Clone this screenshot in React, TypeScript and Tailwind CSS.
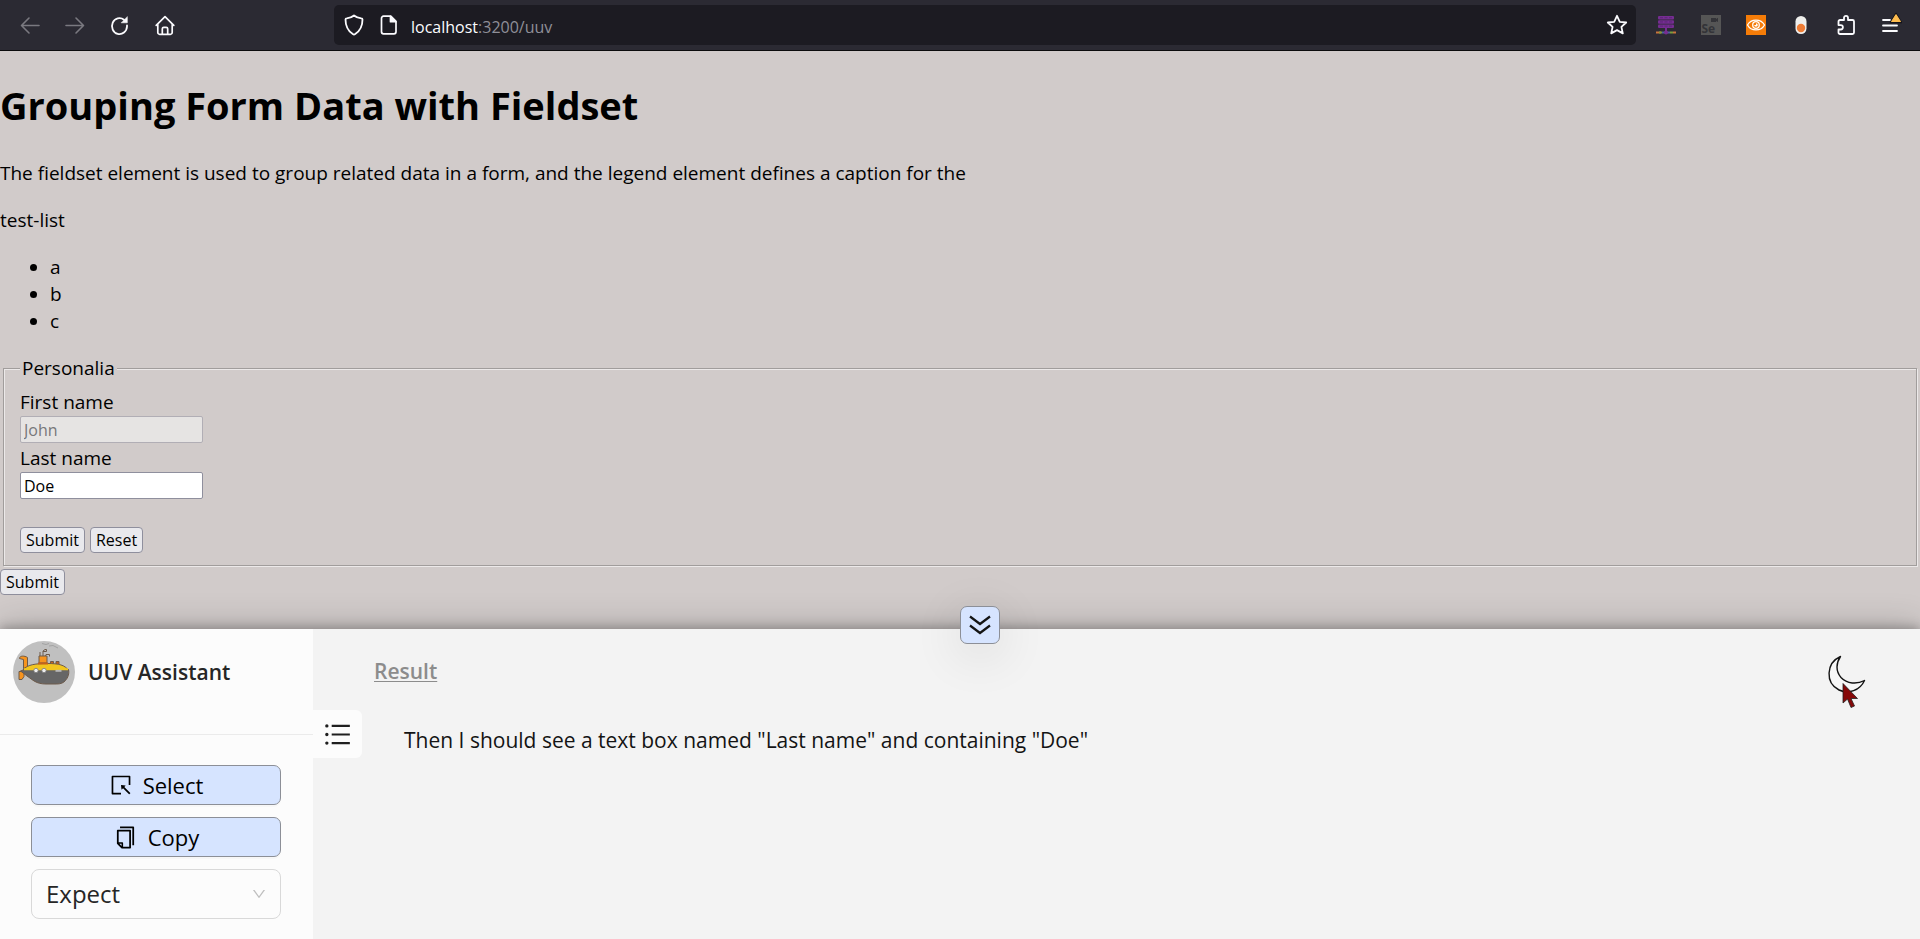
import { AiOutlineCopy, AiOutlineDown, AiOutlineSelect, AiOutlineUnorderedList } from "react-icons/ai";
import type { ReactNode } from "react";

function ToolButton({ label, dim, children }: { label: string; dim?: boolean; children: ReactNode }) {
  return (
    <button
      type="button"
      aria-label={label}
      className={`flex h-10 w-[45px] items-center justify-center ${dim ? "text-[#7a7980]" : "text-[#fbfbfe]"}`}
    >
      {children}
    </button>
  );
}

const stroke = {
  fill: "none",
  stroke: "currentColor",
  strokeWidth: 1.6,
  strokeLinecap: "round",
  strokeLinejoin: "round",
} as const;

function BrowserBar() {
  return (
    <header className="flex h-[51px] shrink-0 items-center border-b border-[#0c0c0d] bg-[#2b2a33] px-[7px]">
      <nav aria-label="Navigation" className="flex w-[327px] shrink-0">
        <ToolButton label="Back" dim>
          <svg width="20" height="20" viewBox="0 0 20 20" {...stroke}>
            <path d="M19 10.500H2M9 3 1.500 10.500 9 18" />
          </svg>
        </ToolButton>
        <ToolButton label="Forward" dim>
          <svg width="20" height="20" viewBox="0 0 20 20" {...stroke}>
            <path d="M1 10.500h17M11 3l7.500 7.500L11 18" />
          </svg>
        </ToolButton>
        <ToolButton label="Reload">
          <svg width="20" height="22" viewBox="0 0 20 22" {...stroke} strokeWidth={1.8}>
            <path d="M17 11.500v1a7.500 8 0 1 1-3-6.800" />
            <path d="M17.300 3v5.800h-5.800z" fill="currentColor" strokeWidth="0.6" />
          </svg>
        </ToolButton>
        <ToolButton label="Home">
          <svg width="20" height="22" viewBox="0 0 20 22" {...stroke} strokeWidth={1.700}>
            <path d="M1.200 11.300 10 2.700l8.800 8.600M2.800 10v8.500a1.800 1.800 0 0 0 1.800 1.800h10.800a1.800 1.800 0 0 0 1.800-1.800V10" />
            <path d="M7.300 20v-5.200a1.500 1.500 0 0 1 1.500-1.500h2.400a1.500 1.500 0 0 1 1.500 1.500V20" />
          </svg>
        </ToolButton>
      </nav>
      <div className="flex h-10 min-w-0 flex-1 items-center rounded-[5px] bg-[#1c1b22] pl-[10px] pr-2 text-[#fbfbfe]">
        <svg width="20" height="22" viewBox="0 0 20 22" {...stroke} strokeWidth={1.800} className="shrink-0">
          <path d="M10 1.500c2 1.700 4.700 2.600 7.300 2.800.8 0 1.200.5 1.200 1.200 0 6.300-2.600 11.500-7.300 14.600-.8.500-1.600.5-2.400 0C4.100 17 1.500 11.800 1.500 5.500c0-.7.4-1.200 1.200-1.200C5.300 4.100 8 3.200 10 1.500z" />
        </svg>
        <svg width="18" height="20" viewBox="0 0 18 20" {...stroke} strokeWidth={1.700} className="ml-4 shrink-0">
          <path d="M3.500 1.200h7.300l5.200 5.200v10.400a2 2 0 0 1-2 2H3.500a2 2 0 0 1-2-2V3.200a2 2 0 0 1 2-2z" />
          <path d="M10.500 1.500v5.200h5.200z" fill="currentColor" />
        </svg>
        <a href="#top" className="ml-[13px] flex-1 truncate pt-[3px] text-base leading-6">
          localhost<span className="text-[#8f8f98]">:3200/uuv</span>
        </a>
        <button type="button" aria-label="Bookmark this page">
          <svg width="22" height="22" viewBox="0 0 22 22" {...stroke} strokeWidth={1.800}>
            <path d="m11 1.800 2.800 6 6.400.7-4.800 4.400 1.400 6.500L11 16.100l-5.800 3.300 1.400-6.500L1.800 8.500l6.400-.7z" />
          </svg>
        </button>
      </div>
      <div className="ml-[7px] flex shrink-0">
        <ToolButton label="Proxy">
          <svg width="20" height="20" viewBox="0 0 20 20">
            <path d="M0 17.500h5" stroke="#c8743c" strokeWidth="2" />
            <path d="M3 17.500h3" stroke="#7d9a3c" strokeWidth="2" />
            <path d="M6 17.500h8" stroke="#4d5f9e" strokeWidth="2" />
            <path d="M14 17.500h3" stroke="#7d9a3c" strokeWidth="2" />
            <path d="M17 17.500h3" stroke="#c8743c" strokeWidth="2" />
            <path d="M10 12v5" stroke="#762d92" strokeWidth="2" />
            <rect x="2" y="1" width="16" height="3.500" rx="1" fill="#762d92" />
            <rect x="2" y="5.200" width="16" height="3.500" rx="1" fill="#762d92" />
            <rect x="2" y="9.400" width="16" height="3.500" rx="1" fill="#762d92" />
            <path d="M4 2.700h12M4 6.900h12M4 11.100h12" stroke="#5c2678" strokeWidth="1" strokeDasharray="3 1.500" />
            <circle cx="10" cy="17.500" r="2" fill="#762d92" />
          </svg>
        </ToolButton>
        <ToolButton label="Selenium IDE">
          <span className="flex h-5 w-5 flex-col bg-[#555555] text-[#333338]">
            <svg width="20" height="7" viewBox="0 0 20 7" fill="currentColor" className="shrink-0">
              <path d="M10 3h5v1l2-1.200V7l-2-1v1h-5z" />
            </svg>
            <span className="pl-px text-left text-xs font-bold leading-[13px]">Se</span>
          </span>
        </ToolButton>
        <ToolButton label="Page viewer">
          <svg width="20" height="20" viewBox="0 0 20 20">
            <path fill="#f57c08" d="M0 0h20v20H0z" />
            <path d="M1.500 10C5 3.500 15 3.500 18.500 10 15 16.500 5 16.500 1.500 10z" fill="none" stroke="#fff" strokeWidth="1.300" />
            <circle cx="10" cy="10" r="3.300" fill="none" stroke="#fff" strokeWidth="1.300" />
            <path d="M10 8.200a1.800 1.800 0 1 1-1.800 1.800H10z" fill="#fff" />
          </svg>
        </ToolButton>
        <ToolButton label="Toggle extension">
          <svg width="20" height="20" viewBox="0 0 20 20">
            <rect x="4.500" y="1" width="11" height="18" rx="5.500" fill="#eeeeec" />
            <circle cx="10" cy="13" r="4.200" fill="#ee7c35" />
          </svg>
        </ToolButton>
        <ToolButton label="Extensions">
          <svg width="20" height="22" viewBox="0 0 20 22" {...stroke} strokeWidth={1.800}>
            <path d="M2.500 7.500a1.500 1.500 0 0 1 1.500-1.500h4V3.800a2 2 0 0 1 4 0V6h4.500A1.500 1.500 0 0 1 18 7.500v11a1.500 1.500 0 0 1-1.500 1.500H4a1.500 1.500 0 0 1-1.500-1.500V15.500h2.200a2.200 2.200 0 0 0 0-4.400H2.500z" />
          </svg>
        </ToolButton>
        <ToolButton label="Application menu">
          <svg width="22" height="26" viewBox="0 0 22 26" {...stroke} strokeWidth={1.800}>
            <path d="M3 8h7M3 13.500h14M3 19h14" />
            <path d="M16 1.500 21.500 10.500h-11z" fill="#14131a" stroke="#14131a" strokeWidth="1.500" />
            <path d="M16 2.800 20.300 9.500h-8.600z" fill="#ffbd4f" stroke="#ffbd4f" strokeWidth="1.200" />
          </svg>
        </ToolButton>
      </div>
    </header>
  );
}

const nativeButton =
  "h-[26px] rounded-[4px] border border-[#8f8f9d] bg-[#e9e9ed] px-[5px] text-base leading-6 text-black";
const nativeInput = "block h-[27px] w-[183px] rounded-[2px] border px-[3px] text-base leading-6";

function DemoPage() {
  return (
    <main className="flex-1 bg-[#d1cbca] pb-6 pt-7 text-[19px] leading-[27px] text-black">
      <h1 className="text-[38px] font-bold leading-[53px]">Grouping Form Data with Fieldset</h1>
      <p className="mt-7">
        The fieldset element is used to group related data in a form, and the legend element defines a caption for the
      </p>
      <p className="mt-5">test-list</p>
      <ul className="mt-5 list-disc pl-[50px]">
        <li>a</li>
        <li>b</li>
        <li>c</li>
      </ul>
      <form onSubmit={(e) => e.preventDefault()}>
        <fieldset className="mx-[3px] mt-5 border border-[#a19d9c] px-4 pb-3 shadow-[inset_1px_1px_0_#ece9e9,1px_1px_0_#ece9e9]">
          <legend className="bg-[#d1cbca] px-[2px]">Personalia</legend>
          <label htmlFor="first" className="mt-[7px] block">
            First name
          </label>
          <input
            id="first"
            disabled
            defaultValue="John"
            className={`${nativeInput} border-[#b1aeb5] bg-[#e6e4e3] text-[#77777a]`}
          />
          <label htmlFor="last" className="mt-[2px] block">
            Last name
          </label>
          <input id="last" defaultValue="Doe" className={`${nativeInput} border-[#8f8f9d] bg-white text-black`} />
          <div className="mt-7 flex gap-[5px]">
            <button type="submit" className={nativeButton}>
              Submit
            </button>
            <button type="reset" className={nativeButton}>
              Reset
            </button>
          </div>
        </fieldset>
        <button type="submit" className={`${nativeButton} mt-[3px] block`}>
          Submit
        </button>
      </form>
    </main>
  );
}

function Submarine() {
  return (
    <svg width="62" height="62" viewBox="0 0 62 62" className="shrink-0" role="img" aria-label="UUV logo">
      <circle cx="31" cy="31" r="31" fill="#c0c0c0" />
      <path d="M29 2.500l4 1 3-1M36 5l4-.5 5 2.500" fill="none" stroke="#9a9a9a" strokeWidth="0.8" />
      <g stroke="#6d5a4a" strokeWidth="1" strokeLinejoin="round">
        <path d="M6.500 17.500c0-3 5-3 8-1v10l-4 1v-9z" fill="#f7941e" />
        <path d="M6 30.500h5v5l-2 3H6z" fill="#f7941e" />
        <path d="M26 22v-7h8v7z" fill="#f7941e" />
        <path d="M27 15v-4M30 15v-5l2-1.500h1.500v2H30M32 15l1-1.500h3.500v2" fill="none" />
        <path d="M37.500 23v-2.500h3V23M43 23v-2.500h3V23" fill="#c4621c" />
        <path d="M10 28.500c5-5 13-6 24-6 12 0 18 1.500 21.500 7z" fill="#f2c61f" />
        <path d="M7.500 30l4-1.500h44c1 4-.5 8-3 11-2 2.500-5 3.500-9 3.500H33c-10 0-13-4-19-8z" fill="#666" />
      </g>
      <path d="M25 22.500h10" stroke="#c4621c" strokeWidth="2" />
      <path d="M11 28.200h44" stroke="#f2c61f" strokeWidth="2" />
      <path d="M42.500 29.800h6" stroke="#b8b8b8" strokeWidth="2" />
      <circle cx="23" cy="29.500" r="2.200" fill="#eee" stroke="#777" strokeWidth="0.8" />
      <circle cx="31" cy="29.500" r="2.200" fill="#eee" stroke="#777" strokeWidth="0.8" />
    </svg>
  );
}

const actionButton =
  "flex h-10 w-full items-center justify-center gap-[10px] rounded-[7px] border border-[#8c8f97] bg-[#d6e4ff] text-[22px] leading-8 text-black shadow-[0_2px_0_rgba(0,0,0,0.02)]";

function AssistantPanel() {
  return (
    <section
      aria-label="UUV Assistant"
      className="relative flex min-h-[310px] shrink-0 bg-[#f3f3f3] shadow-[0_-6px_30px_rgba(0,0,0,0.16),0_-2px_10px_rgba(0,0,0,0.26)]"
    >
      <aside className="w-[313px] shrink-0 bg-[#fcfcfc]">
        <div className="flex h-[106px] gap-[13px] border-b border-[#ebebeb] pl-[13px] pt-3">
          <Submarine />
          <h2 className="text-[21px] font-semibold leading-[62px] text-[#262626]">UUV Assistant</h2>
        </div>
        <div className="flex flex-col gap-3 pl-[31px] pr-8 pt-[30px]">
          <button type="button" className={actionButton}>
            <AiOutlineSelect size={24} />
            Select
          </button>
          <button type="button" className={actionButton}>
            <AiOutlineCopy size={25} />
            Copy
          </button>
          <div className="grid items-center">
            <select
              aria-label="Action"
              defaultValue="Expect"
              className="col-start-1 row-start-1 h-[50px] w-full appearance-none rounded-lg border border-[#d9d9d9] bg-[#fcfcfc] pl-[14px] text-[24px] leading-8 text-[#262626]"
            >
              <option>Expect</option>
            </select>
            <AiOutlineDown
              size={16}
              className="pointer-events-none col-start-1 row-start-1 mr-[14px] justify-self-end text-[#bfbfbf]"
            />
          </div>
        </div>
      </aside>
      <button
        type="button"
        aria-label="Toggle menu"
        className="mt-[81px] flex h-12 w-[49px] shrink-0 items-center justify-center rounded-r-[6px] bg-[#fcfcfc] text-[#1f1f1f]"
      >
        <AiOutlineUnorderedList size={31} />
      </button>
      <div className="min-w-0 flex-1 pl-3 pt-[26px]">
        <h3 className="text-[21px] font-semibold leading-8 text-[#8c8c8c] underline decoration-1 underline-offset-2">
          Result
        </h3>
        <p className="pl-[30px] pt-[37px] text-[21px] leading-8 text-[#141414]">
          Then I should see a text box named "Last name" and containing "Doe"
        </p>
      </div>
      <button type="button" aria-label="Dark mode" className="mr-[53px] mt-6 h-14 w-10 shrink-0 self-start">
        <svg width="40" height="56" viewBox="0 0 40 56">
          <path
            d="M13.500 3.500C-1 10 -2 30 12 37c9.500 4.500 21 .5 25.500-9.500C30 31.500 20 31 14 24.500 8.500 18 9 10 13.500 3.500z"
            fill="#f8f8f8"
            stroke="#141414"
            strokeWidth="1.400"
            strokeLinejoin="round"
          />
          <path d="M16 30.500V50l4.500-4 3.500 8.500 3.500-1.500-3.500-7.500h6.500z" fill="#860808" stroke="#222" strokeWidth="0.800" />
        </svg>
      </button>
      <button
        type="button"
        aria-label="Collapse panel"
        className="absolute -top-[23px] left-1/2 flex h-[38px] w-10 items-center justify-center rounded-[7px] border border-[#8c8f97] bg-[#d6e4ff] text-[#141414] shadow-[0_10px_50px_rgba(0,0,0,0.12)]"
      >
        <svg width="22" height="20" viewBox="0 0 22 20" fill="none" stroke="currentColor" strokeWidth="2.200">
          <path d="m1 1.500 10 7.500 10-7.500M1 10.500 11 18l10-7.500" />
        </svg>
      </button>
    </section>
  );
}

export default function App() {
  return (
    <div id="top" className="flex min-h-screen flex-col font-['Open_Sans','Noto_Sans',sans-serif]">
      <BrowserBar />
      <DemoPage />
      <AssistantPanel />
    </div>
  );
}
